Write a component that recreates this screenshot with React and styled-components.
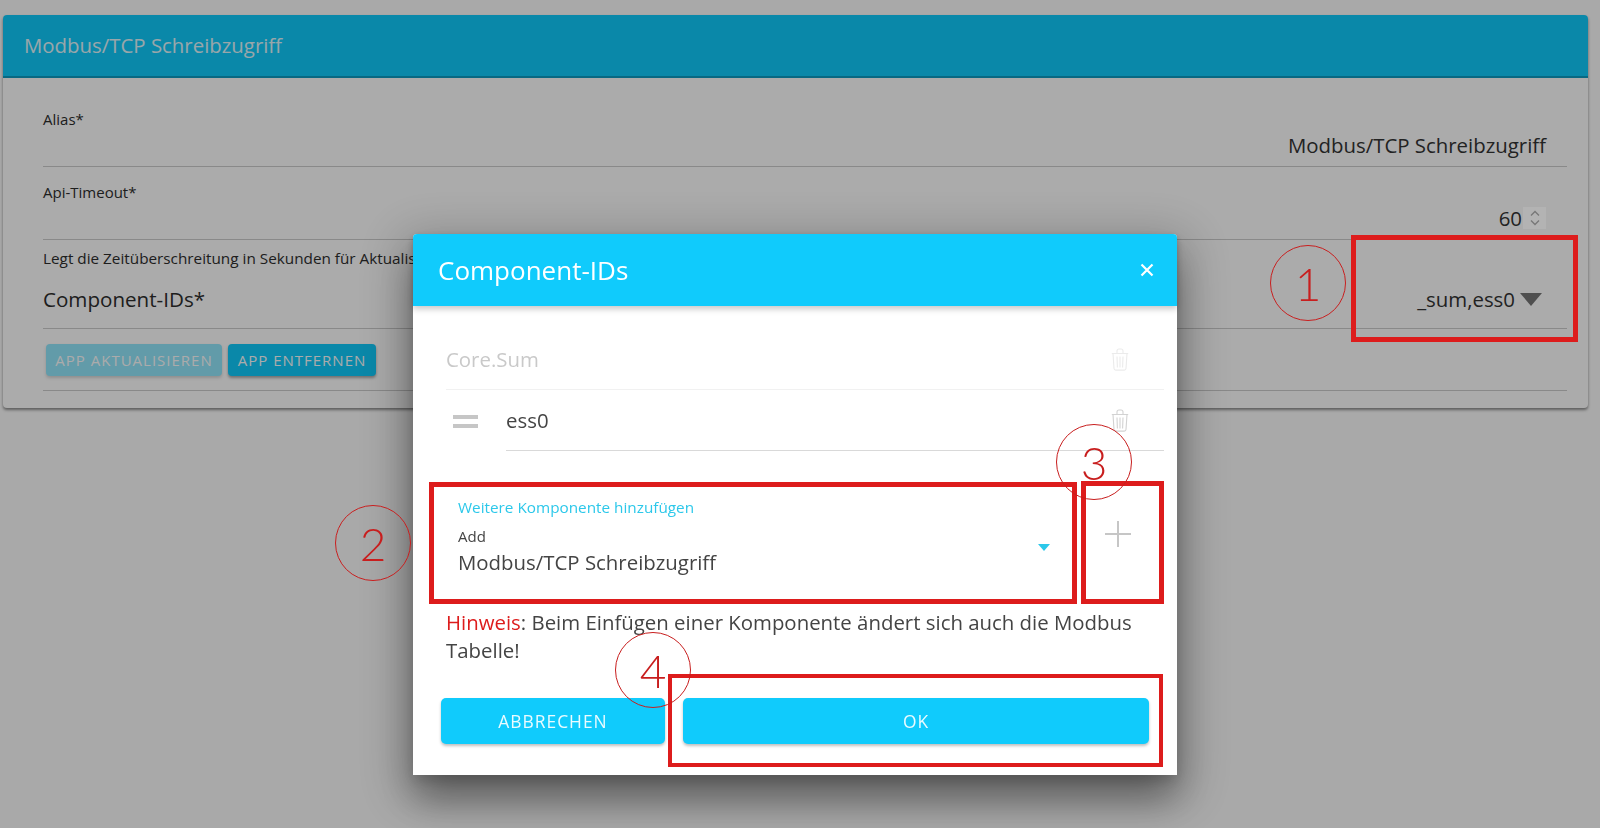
import React from "react";
import styled, { createGlobalStyle } from "styled-components";

const CYAN = "#10cbfc";
const RED = "#dd1c1c";

function TrashIcon() {
  return (
    <svg width="18" height="23" viewBox="0 0 18 23" fill="none" stroke="currentColor" strokeWidth="1.1">
      <path d="M.8 5.5h16.4M6 5.5V3c0-1.2.8-2 2-2h2c1.2 0 2 .8 2 2v2.5" />
      <path d="M2 5.5l1 15c.1 1 .7 1.6 1.7 1.6h8.6c1 0 1.6-.6 1.7-1.6l1-15" />
      <path d="M6 8.5l.4 11M9 8.5v11M12 8.5l-.4 11" />
    </svg>
  );
}

function App() {
  return (
    <>
      <GlobalStyle />
      <Card>
        <CardHeader>Modbus/TCP Schreibzugriff</CardHeader>
        <CardBody>
          <Field $top={31} $bottom={8}>
            <Label>Alias*</Label>
            <Value>Modbus/TCP Schreibzugriff</Value>
          </Field>
          <Field $top={15} $bottom={8}>
            <Label>Api-Timeout*</Label>
            <Value>
              60
              <Spinner>
                <svg width="12" height="18" viewBox="0 0 12 18" fill="none" stroke="#777" strokeWidth="1.3">
                  <path d="M2 6.5 6 2.5 10 6.5M2 11.5 6 15.5 10 11.5" />
                </svg>
              </Spinner>
            </Value>
          </Field>
          <Field $top={8} $bottom={15}>
            <Help>Legt die Zeitüberschreitung in Sekunden für Aktualisierungen der Komponenten fest.</Help>
            <SelectRow>
              <SelectName>Component-IDs*</SelectName>
              <SelectValue>_sum,ess0</SelectValue>
              <Caret />
            </SelectRow>
          </Field>
          <CardActions>
            <CardButton $width="176px" $disabled>
              App aktualisieren
            </CardButton>
            <CardButton $width="148px">App entfernen</CardButton>
          </CardActions>
        </CardBody>
      </Card>

      <Backdrop>
        <Dialog>
          <DialogHeader>
            <DialogTitle>Component-IDs</DialogTitle>
            <svg width="16" height="16" viewBox="0 0 16 16" stroke="#fff" strokeWidth="2.2">
              <path d="M2.5 2.5l11 11M13.5 2.5l-11 11" />
            </svg>
          </DialogHeader>
          <DialogBody>
            <FixedItem>
              <span>Core.Sum</span>
              <TrashSlot $faint>
                <TrashIcon />
              </TrashSlot>
            </FixedItem>
            <MovableItem>
              <DragHandle>
                <i />
                <i />
              </DragHandle>
              <ItemInput>
                <span>ess0</span>
                <TrashSlot>
                  <TrashIcon />
                </TrashSlot>
              </ItemInput>
            </MovableItem>
            <AddRow>
              <AddField>
                <AddTexts>
                  <AddLabel>Weitere Komponente hinzufügen</AddLabel>
                  <AddSmall>Add</AddSmall>
                  <AddValue>Modbus/TCP Schreibzugriff</AddValue>
                </AddTexts>
                <AddCaret />
              </AddField>
              <AddButton>
                <svg width="28" height="28" viewBox="0 0 28 28" stroke="#c6c6c6" strokeWidth="2">
                  <path d="M14 1v26M1 14h26" />
                </svg>
              </AddButton>
            </AddRow>
            <Hint>
              <b>Hinweis</b>: Beim Einfügen einer Komponente ändert sich auch die Modbus Tabelle!
            </Hint>
            <DialogActions>
              <DialogButton $width="224px">Abbrechen</DialogButton>
              <DialogButton $width="466px">OK</DialogButton>
            </DialogActions>
          </DialogBody>
        </Dialog>
      </Backdrop>

      {/* red annotations drawn on top of the screenshot */}
      <Frame $x={1351} $y={235} $w={227} $h={107} />
      <Frame $x={429} $y={482} $w={648} $h={122} />
      <Frame $x={1081} $y={481} $w={83} $h={123} />
      <Frame $x={668} $y={674} $w={495} $h={93} $thin />
      <Badge $x={1308} $y={283}>1</Badge>
      <Badge $x={373} $y={543}>2</Badge>
      <Badge $x={1094} $y={462}>3</Badge>
      <Badge $x={653} $y={670}>4</Badge>
    </>
  );
}

const GlobalStyle = createGlobalStyle`
  html, body {
    margin: 0;
    height: 100%;
    overflow: hidden;
    background: #fcfcfc;
    font-family: "Open Sans", "Noto Sans", sans-serif;
    color: #2e2e2e;
  }
  * {
    box-sizing: border-box;
  }
`;

const Card = styled.section`
  margin: 15px 12px 0 3px;
  background: #fff;
  border-radius: 4px;
  box-shadow: 0 2px 3px rgba(0, 0, 0, 0.45);
  overflow: hidden;
`;

const CardHeader = styled.header`
  height: 63px;
  padding-left: 21px;
  background: ${CYAN};
  border-bottom: 2px solid #0c9cc2;
  color: #e4f8fe;
  font-size: 20.4px;
  line-height: 61px;
`;

const CardBody = styled.div`
  padding: 0 21px 17px 40px;
`;

const Field = styled.div`
  padding: ${(p) => p.$top}px 0 ${(p) => p.$bottom}px;
  border-bottom: 1px solid #ccc;
`;

const Label = styled.div`
  font-size: 15px;
  line-height: 20px;
`;

const Value = styled.div`
  display: flex;
  justify-content: flex-end;
  align-items: center;
  height: 26px;
  margin-top: 3px;
  padding-right: 21px;
  font-size: 20.4px;
  color: #333;
`;

const Spinner = styled.span`
  position: relative;
  z-index: 1;
  display: flex;
  align-items: center;
  justify-content: center;
  width: 23px;
  height: 22px;
  margin-left: 1px;
  background: #b3b3b3;
`;

const Help = styled.div`
  width: 372px;
  overflow: hidden;
  font-size: 15.3px;
  line-height: 20px;
  white-space: nowrap;
`;

const SelectRow = styled.div`
  display: flex;
  align-items: center;
  height: 28px;
  margin-top: 17px;
  padding-right: 25px;
`;

const SelectName = styled.div`
  flex: 1;
  font-size: 20.6px;
`;

const SelectValue = styled.div`
  font-size: 20.4px;
  color: #333;
`;

const Caret = styled.span`
  width: 0;
  height: 0;
  margin: 0 0 0 5px;
  border-left: 11px solid transparent;
  border-right: 11px solid transparent;
  border-top: 13px solid #777;
`;

const CardActions = styled.div`
  display: flex;
  gap: 6px;
  padding: 15px 0 14px 3px;
  border-bottom: 1px solid #ccc;
`;

const CardButton = styled.button`
  width: ${(p) => p.$width};
  height: 32px;
  padding: 0;
  border: 0;
  border-radius: 4px;
  background: ${CYAN};
  box-shadow: 0 2px 3px rgba(0, 0, 0, 0.35);
  color: #fff;
  font-family: inherit;
  font-size: 15px;
  letter-spacing: 1px;
  white-space: nowrap;
  text-transform: uppercase;
  opacity: ${(p) => (p.$disabled ? 0.45 : 1)};
`;

const Backdrop = styled.div`
  position: fixed;
  inset: 0;
  padding: 234px 0 0 413px;
  background: rgba(0, 0, 0, 0.33);
`;

const Dialog = styled.div`
  width: 764px;
  background: #fff;
  border-radius: 4px 4px 0 0;
  box-shadow: 0 26px 36px -4px rgba(0, 0, 0, 0.36), 0 12px 48px 14px rgba(0, 0, 0, 0.2),
    0 6px 12px rgba(0, 0, 0, 0.12);
`;

const DialogHeader = styled.header`
  position: relative;
  display: flex;
  align-items: center;
  justify-content: space-between;
  height: 72px;
  padding: 0 22px 0 25px;
  background: ${CYAN};
  border-radius: 4px 4px 0 0;
  box-shadow: 0 3px 6px rgba(0, 0, 0, 0.22);
`;

const DialogTitle = styled.h2`
  margin: 0;
  color: #fff;
  font-size: 26px;
  font-weight: 400;
`;

const DialogBody = styled.div`
  padding: 0 13px 31px 33px;
`;

const FixedItem = styled.div`
  display: flex;
  align-items: center;
  justify-content: space-between;
  height: 84px;
  padding: 39px 35px 16px 0;
  border-bottom: 1px solid #f1f1f1;
  color: #c9c9c9;
  font-size: 20.4px;
`;

const TrashSlot = styled.span`
  display: flex;
  color: ${(p) => (p.$faint ? "#ebebeb" : "#d2d2d2")};
`;

const MovableItem = styled.div`
  display: flex;
  height: 61px;
`;

const DragHandle = styled.div`
  display: flex;
  flex-direction: column;
  gap: 5px;
  width: 60px;
  padding: 25px 0 0 7px;

  i {
    display: block;
    width: 25px;
    height: 4px;
    background: #c6c6c6;
  }
`;

const ItemInput = styled.div`
  flex: 1;
  display: flex;
  align-items: center;
  justify-content: space-between;
  padding-right: 35px;
  border-bottom: 1px solid #d9d9d9;
  color: #444;
  font-size: 20.4px;
`;

const AddRow = styled.div`
  display: flex;
  height: 122px;
  margin-top: 31px;
`;

const AddField = styled.div`
  flex: 1;
  display: flex;
  justify-content: space-between;
  padding: 15px 30px 0 12px;
`;

const AddTexts = styled.div`
  display: flex;
  flex-direction: column;
`;

const AddLabel = styled.div`
  color: #2cc8ea;
  font-size: 15.3px;
  line-height: 20px;
`;

const AddSmall = styled.div`
  margin-top: 9px;
  color: #444;
  font-size: 15px;
  line-height: 20px;
`;

const AddValue = styled.div`
  margin-top: 2px;
  color: #444;
  font-size: 20.4px;
  line-height: 28px;
`;

const AddCaret = styled.span`
  width: 0;
  height: 0;
  margin-top: 47px;
  border-left: 6px solid transparent;
  border-right: 6px solid transparent;
  border-top: 7px solid #2cc8ea;
`;

const AddButton = styled.div`
  display: flex;
  justify-content: center;
  width: 84px;
  padding: 38px 8px 0 0;
`;

const Hint = styled.p`
  margin: 4px 0 0;
  color: #444;
  font-size: 20.4px;
  line-height: 28px;

  b {
    color: ${RED};
    font-weight: 400;
  }
`;

const DialogActions = styled.div`
  display: flex;
  gap: 18px;
  margin: 34px 0 0 -5px;
`;

const DialogButton = styled.button`
  width: ${(p) => p.$width};
  height: 46px;
  border: 0;
  border-radius: 5px;
  background: ${CYAN};
  box-shadow: 0 2px 3px rgba(0, 0, 0, 0.25);
  color: #e9fbff;
  font-family: inherit;
  font-size: 17.4px;
  font-weight: 500;
  letter-spacing: 1px;
  text-transform: uppercase;
`;

const Frame = styled.div`
  position: fixed;
  left: ${(p) => p.$x}px;
  top: ${(p) => p.$y}px;
  width: ${(p) => p.$w}px;
  height: ${(p) => p.$h}px;
  border: ${(p) => (p.$thin ? 4 : 5)}px solid ${RED};
`;

const Badge = styled.div`
  position: fixed;
  left: ${(p) => p.$x - 38}px;
  top: ${(p) => p.$y - 38}px;
  width: 76px;
  height: 76px;
  display: flex;
  align-items: center;
  justify-content: center;
  border: 1.7px solid #c81e1e;
  border-radius: 50%;
  color: #c81e1e;
  font-family: "Lato", sans-serif;
  font-size: 46px;
  font-weight: 300;
`;

export default App;
